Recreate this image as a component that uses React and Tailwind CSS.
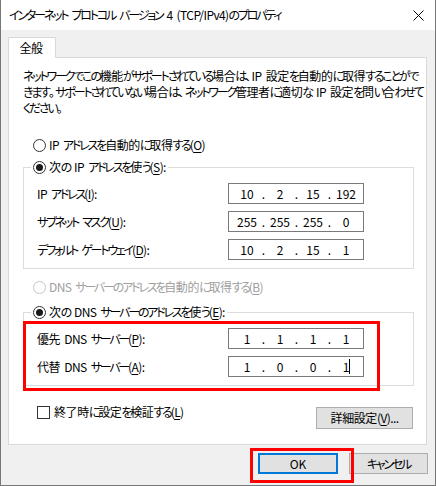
import React from "react";

// Windows 10 style "TCP/IPv4 properties" dialog.
const font = "font-['Noto_Sans_CJK_JP','Noto_Sans',sans-serif] [font-feature-settings:'palt'] [word-spacing:2px]";

// Renders a dialog string. "&X" marks the accelerator key (underlined), and
// kana / latin / kanji runs get their own tracking so the text comes out as
// narrow as Yu Gothic UI.
function W({ s }) {
  const re = /&(.)|([\x20-\x25\x27-\x7e]+)|([\u3001\u3002]+)|([\u3003-\u30ff\uff00-\uffef]+)|([^\x20-\x7e\u3001-\u30ff\uff00-\uffef]+)/g;
  const out = [];
  let m;
  let i = 0;
  while ((m = re.exec(s))) {
    if (m[1]) out.push(<span key={i++} className="underline underline-offset-2 tracking-[-0.6px]">{m[1]}</span>);
    else if (m[2]) out.push(<span key={i++} className="tracking-[-0.6px]">{m[2]}</span>);
    else if (m[3]) out.push(<span key={i++} className="tracking-[0.5px]">{m[3]}</span>);
    else if (m[4]) out.push(<span key={i++} className="tracking-[-2.2px]">{m[4]}</span>);
    else out.push(<span key={i++} className="tracking-[-0.4px]">{m[5]}</span>);
  }
  return <>{out}</>;
}

function Radio({ checked, disabled }) {
  return (
    <span
      className={`flex h-[13px] w-[13px] shrink-0 items-center justify-center rounded-full border bg-white ${
        disabled ? "border-[#c5c5c5]" : "border-[#333333]"
      }`}
    >
      {checked && <span className="h-[7px] w-[7px] rounded-full bg-[#1a1a1a]" />}
    </span>
  );
}

function IpBox({ parts, caret }) {
  return (
    <div className="flex h-[21px] w-[136px] items-center border border-[#7a7a7a] bg-white pl-[5px] text-black">
      {parts.map((p, i) => (
        <React.Fragment key={i}>
          {i > 0 && <span className="w-[7px] text-center">.</span>}
          <span className="relative w-[26px] text-center">
            {p}
            {caret && i === parts.length - 1 && (
              <span className="absolute right-[9px] top-[1px] h-[15px] w-px bg-black" />
            )}
          </span>
        </React.Fragment>
      ))}
    </div>
  );
}

function Row({ label, parts, caret }) {
  return (
    <div className="flex items-center">
      <span className="w-[191px] whitespace-nowrap">
        <W s={label} />
      </span>
      <IpBox parts={parts} caret={caret} />
    </div>
  );
}

function Button({ children, primary, className = "" }) {
  return (
    <div
      className={`flex items-center justify-center bg-[#e1e1e1] ${
        primary ? "border border-[#0078d7] shadow-[inset_0_0_0_1px_#0078d7]" : "border border-[#adadad]"
      } ${className}`}
    >
      {children}
    </div>
  );
}

export default function App() {
  return (
    <div className={`relative flex h-[486px] w-[436px] flex-col border-x border-b border-[#777777] bg-[#f0f0f0] text-[12px] text-black ${font}`}>
      {/* title bar */}
      <div className="flex h-[30px] shrink-0 items-center justify-between bg-white pl-[8px] pr-[11px]">
        <span className="whitespace-nowrap">
          <W s="インターネット プロトコル バージョン 4 (TCP/IPv4)のプロパティ" />
        </span>
        <svg width="11" height="11" viewBox="0 0 11 11" className="text-black">
          <path d="M0.5 0.5 L10.5 10.5 M10.5 0.5 L0.5 10.5" stroke="currentColor" strokeWidth="1" />
        </svg>
      </div>

      <div className="flex flex-col px-[7px] pt-[7px]">
        {/* tab */}
        <div className="relative z-10 -mb-px flex h-[21px] w-[48px] items-center justify-center border border-b-0 border-[#d9d9d9] bg-white pr-[2px]">
          <W s="全般" />
        </div>

        {/* panel */}
        <div className="flex h-[388px] w-[419px] flex-col border border-[#d9d9d9] bg-white">
          <p className="mt-[10px] pl-[14px] leading-[16px] whitespace-nowrap">
            <W s="ネットワークでこの機能がサポートされている場合は、IP 設定を自動的に取得することがで" />
            <br />
            <W s="きます。サポートされていない場合は、ネットワーク管理者に適切な IP 設定を問い合わせて" />
            <br />
            <W s="ください。" />
          </p>

          <div className="mt-[21px] flex h-[16px] items-center gap-[3px] pl-[24px]">
            <Radio />
            <span>
              <W s="IP アドレスを自動的に取得する(&O)" />
            </span>
          </div>

          <fieldset className="ml-[14px] mt-[6px] w-[391px] border border-[#dcdcdc] pb-[8px]">
            <legend className="ml-[7px] px-[2px]">
              <span className="flex h-[16px] items-center gap-[3px]">
                <Radio checked />
                <span>
                  <W s="次の IP アドレスを使う(&S):" />
                </span>
              </span>
            </legend>
            <div className="flex flex-col gap-[7px] pl-[13px] pt-[8px]">
              <Row label="IP アドレス(&I):" parts={["10", "2", "15", "192"]} />
              <Row label="サブネット マスク(&U):" parts={["255", "255", "255", "0"]} />
              <Row label="デフォルト ゲートウェイ(&D):" parts={["10", "2", "15", "1"]} />
            </div>
          </fieldset>

          <div className="mt-[10px] flex h-[16px] items-center gap-[3px] pl-[24px] text-[#a0a0a0]">
            <Radio disabled />
            <span>
              <W s="DNS サーバーのアドレスを自動的に取得する(&B)" />
            </span>
          </div>

          <fieldset className="ml-[14px] mt-[9px] w-[391px] border border-[#dcdcdc] pb-[8px]">
            <legend className="ml-[7px] px-[2px]">
              <span className="flex h-[16px] items-center gap-[3px]">
                <Radio checked />
                <span>
                  <W s="次の DNS サーバーのアドレスを使う(&E):" />
                </span>
              </span>
            </legend>
            <div className="flex flex-col gap-[7px] pl-[13px] pt-[8px]">
              <Row label="優先 DNS サーバー(&P):" parts={["1", "1", "1", "1"]} />
              <Row label="代替 DNS サーバー(&A):" parts={["1", "0", "0", "1"]} caret />
            </div>
          </fieldset>

          <div className="mt-[21px] flex items-start justify-between pl-[28px] pr-[13px]">
            <div className="-mt-[3px] flex h-[16px] items-center gap-[4px]">
              <span className="h-[13px] w-[13px] border border-[#333333] bg-white" />
              <span>
                <W s="終了時に設定を検証する(&L)" />
              </span>
            </div>
            <Button className="h-[22px] w-[97px]">
              <W s="詳細設定(&V)..." />
            </Button>
          </div>
        </div>

        {/* dialog buttons */}
        <div className="mt-[8px] flex gap-[11px] pl-[250px]">
          <Button primary className="h-[21px] w-[82px]">
            OK
          </Button>
          <Button className="h-[21px] w-[81px]">
            <W s="キャンセル" />
          </Button>
        </div>
      </div>

      {/* red annotation boxes */}
      <div className="pointer-events-none absolute left-[22px] top-[321px] h-[70px] w-[357px] border-[3px] border-[#ff0000]" />
      <div className="pointer-events-none absolute left-[249px] top-[448px] h-[35px] w-[104px] border-[3px] border-[#ff0000]" />
    </div>
  );
}
